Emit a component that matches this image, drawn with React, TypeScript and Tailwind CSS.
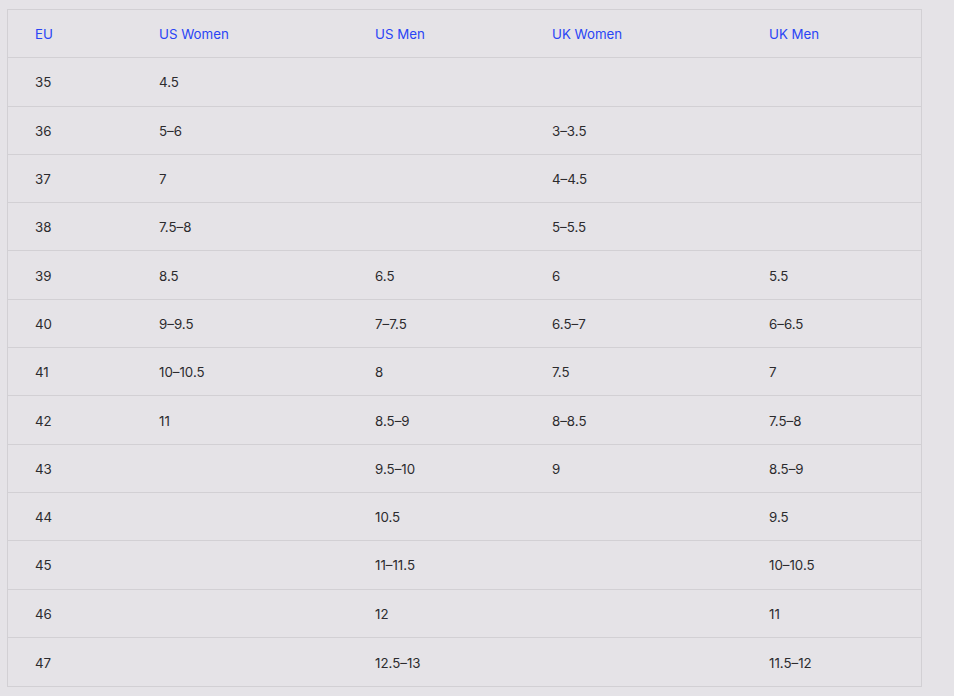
const headers = ["EU", "US Women", "US Men", "UK Women", "UK Men"];

const rows: string[][] = [
  ["35", "4.5", "", "", ""],
  ["36", "5-6", "", "3-3.5", ""],
  ["37", "7", "", "4-4.5", ""],
  ["38", "7.5-8", "", "5-5.5", ""],
  ["39", "8.5", "6.5", "6", "5.5"],
  ["40", "9-9.5", "7-7.5", "6.5-7", "6-6.5"],
  ["41", "10-10.5", "8", "7.5", "7"],
  ["42", "11", "8.5-9", "8-8.5", "7.5-8"],
  ["43", "", "9.5-10", "9", "8.5-9"],
  ["44", "", "10.5", "", "9.5"],
  ["45", "", "11-11.5", "", "10-10.5"],
  ["46", "", "12", "", "11"],
  ["47", "", "12.5-13", "", "11.5-12"],
];

const cols = "grid grid-cols-[124px_216px_177px_217px_180px]";

export default function App() {
  return (
    <div className="min-h-[696px] w-full bg-[#e5e3e7] pl-[7px] pt-[9px] font-['Inter','Liberation_Sans',sans-serif] text-[13.3px]">
      <div className="w-[915px] border border-[#d2d0d4]">
        <div className={`${cols} h-[48.3px] items-center border-b border-[#d2d0d4] pt-[3px] text-[#2a45f5]`}>
          {headers.map((h) => (
            <div key={h} className="pl-[27px]">
              {h}
            </div>
          ))}
        </div>
        {rows.map((row, i) => (
          <div
            key={row[0]}
            className={`${cols} h-[48.3px] items-center pt-[3px] text-[#2c2b2e] ${
              i < rows.length - 1 ? "border-b border-[#d2d0d4]" : ""
            }`}
          >
            {row.map((cell, j) => (
              <div key={j} className="pl-[27px]">
                {cell.replace(/-/g, "\u2013")}
              </div>
            ))}
          </div>
        ))}
      </div>
    </div>
  );
}
